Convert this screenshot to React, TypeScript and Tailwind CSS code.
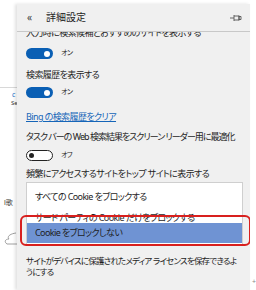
import React from "react";

function ToggleOn() {
  return (
    <div className="w-[27px] h-[11px] rounded-full bg-[#0a5fb4] flex items-center justify-end pr-[3px]">
      <div className="w-[6px] h-[6px] rounded-full bg-white" />
    </div>
  );
}

function ToggleOff() {
  return (
    <div className="w-[27px] h-[11px] rounded-full border-[1.5px] border-[#222] bg-white flex items-center pl-[2px]">
      <div className="w-[5px] h-[5px] rounded-full bg-[#222]" />
    </div>
  );
}

export default function App() {
  return (
    <div
      className="w-[256px] h-[290px] bg-white flex overflow-hidden text-[#1e1e1e] [font-feature-settings:'palt'] tracking-[-0.6px]"
      style={{ fontFamily: '"Noto Sans", "Noto Sans CJK JP", sans-serif' }}
    >
      {/* background page strip */}
      <div className="w-[17px] shrink-0 flex flex-col text-[7px] text-[#333] tracking-normal">
        <div className="h-[88px] border-b border-[#d8d8d8]" />
        <div className="h-[9px] pl-[12px] text-[#1a73c8] leading-[9px] mt-[2px]">c</div>
        <div className="pl-[11px] leading-[8px] text-[6px]">Se</div>
        <div className="pl-[4px] mt-[92px] leading-[8px] text-[7px]">l歌</div>
        <div className="pl-[3px] mt-[24px]">
          <svg width="14" height="14" viewBox="0 0 14 14">
            <path d="M13 2 C6 3 4 6 6 8 C2 8 1 11 4 13 L14 13" fill="none" stroke="#888" strokeWidth="0.8" />
          </svg>
        </div>
      </div>

      {/* panel */}
      <div className="w-[233px] shrink-0 mt-[4px] bg-[#f0f0f0] flex flex-col shadow-[-2px_0_3px_rgba(0,0,0,0.12)] relative">
        <div className="h-[28px] shrink-0 border-b border-[#c8c8c8] flex items-center pl-[10px] pr-[8px] relative z-10 bg-[#f0f0f0]">
          <span className="text-[10px] text-[#444] w-[19px]">«</span>
          <span className="text-[10px] text-[#222] tracking-[0px]">詳細設定</span>
          <div className="ml-auto">
            <svg width="12" height="8" viewBox="0 0 12 8">
              <path d="M0 4 H4 M4 1 V7 M4 2 H9 V6 H4 M9 1.5 V6.5 M9 2.5 H11 V5.5 H9" fill="none" stroke="#555" strokeWidth="0.9" />
            </svg>
          </div>
        </div>

        <div className="flex flex-col pl-[9px] overflow-hidden flex-1">
          <div className="text-[9px] leading-[12px] mt-[-5px] whitespace-nowrap">入力時に検索候補とおすすめのサイトを表示する</div>
          <div className="flex items-center gap-[8px] mt-[9px] h-[11px]">
            <ToggleOn />
            <span className="text-[7px]">オン</span>
          </div>
          <div className="text-[9px] leading-[12px] mt-[10px]">検索履歴を表示する</div>
          <div className="flex items-center gap-[8px] mt-[6px] h-[11px]">
            <ToggleOn />
            <span className="text-[7px]">オン</span>
          </div>
          <div className="text-[9px] leading-[12px] mt-[13px] text-[#1565b8] underline underline-offset-1">Bing の検索履歴をクリア</div>
          <div className="text-[9px] leading-[12px] mt-[8px] whitespace-nowrap tracking-[-1px]">タスク バーの Web 検索結果をスクリーン リーダー用に最適化</div>
          <div className="flex items-center gap-[8px] mt-[7px] h-[11px]">
            <ToggleOff />
            <span className="text-[7px]">オフ</span>
          </div>
          <div className="text-[9px] leading-[12px] mt-[7px] whitespace-nowrap">頻繁にアクセスするサイトをトップ サイトに表示する</div>

          <div className="mt-[2px] w-[217px] bg-white border border-[#cfcfcf] flex flex-col pt-[8px] pb-[1px]">
            <div className="text-[9px] leading-[12px] pl-[8px]">すべての Cookie をブロックする</div>
            <div className="text-[9px] leading-[12px] pl-[8px] mt-[9px]">サード パーティの Cookie だけをブロックする</div>
            <div className="relative mt-[-1px] h-[20px] bg-[#6f93d3] flex items-center pl-[8px] text-[9px]">
              Cookie をブロックしない
              <div className="absolute left-[-7px] right-[-9px] top-[-8px] bottom-[-3px] border-2 border-[#d8201e] rounded-[6px]" />
            </div>
          </div>

          <div className="text-[8.5px] leading-[11px] mt-[10px] whitespace-nowrap tracking-[-0.8px]">
            サイトがデバイスに保護されたメディア ライセンスを保存できるよ
            <br />
            うにする
          </div>
        </div>
      </div>

      <div className="flex-1 flex flex-col justify-end pb-[3px] pl-[2px] text-[7px] text-[#888]">+</div>
    </div>
  );
}
